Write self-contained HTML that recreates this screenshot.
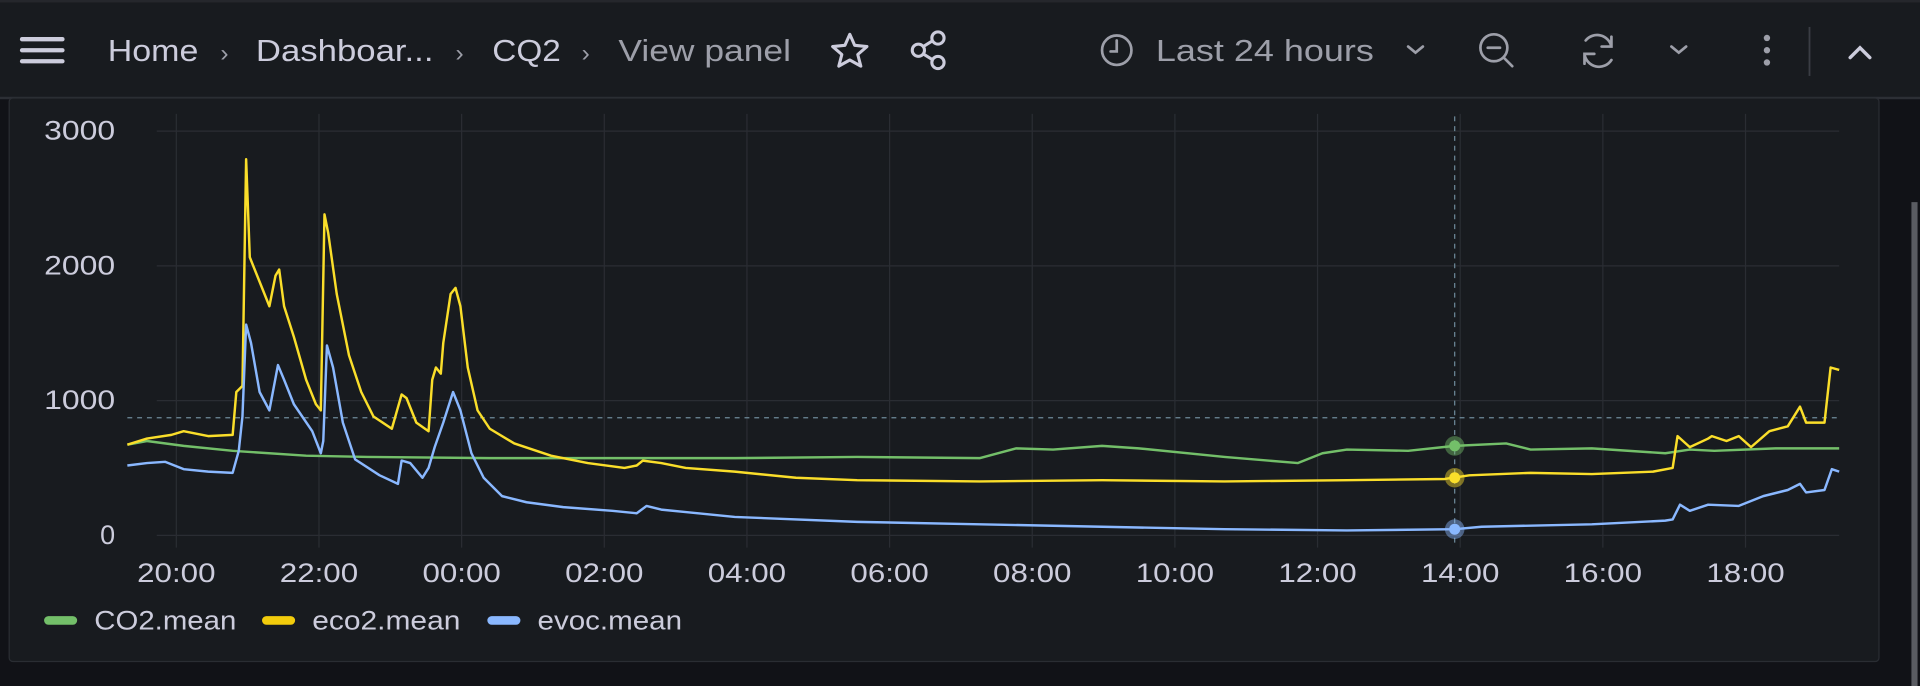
<!DOCTYPE html>
<html><head><meta charset="utf-8"><style>
html,body{margin:0;padding:0;background:#111217;overflow:hidden}
svg{display:block}
text{font-family:"Liberation Sans",sans-serif}
</style></head><body>
<svg width="1920" height="686" viewBox="0 0 1568 560" preserveAspectRatio="none">
<rect width="1568" height="560" fill="#111217"/>
<!-- header -->
<rect x="0" y="0" width="1568" height="80" fill="#181b1f"/>
<rect x="0" y="0" width="1568" height="2" fill="#25272c"/>
<rect x="0" y="79" width="1568" height="2" fill="#2c2f35"/>
<g stroke="#ccccdc" stroke-width="3.5" stroke-linecap="round">
<line x1="18" y1="32" x2="51" y2="32"/><line x1="18" y1="41" x2="51" y2="41"/><line x1="18" y1="50" x2="51" y2="50"/>
</g>
<g font-size="25" fill="#ccccdc" lengthAdjust="spacingAndGlyphs">
<text x="88" y="50" textLength="74" lengthAdjust="spacingAndGlyphs">Home</text>
<text x="180" y="50" fill="#9d9fa9" font-size="20">›</text>
<text x="209" y="50" textLength="145" lengthAdjust="spacingAndGlyphs">Dashboar...</text>
<text x="372" y="50" fill="#9d9fa9" font-size="20">›</text>
<text x="402" y="50" textLength="56" lengthAdjust="spacingAndGlyphs">CQ2</text>
<text x="475" y="50" fill="#9d9fa9" font-size="20">›</text>
<text x="505" y="50" fill="#9d9fa9" textLength="141" lengthAdjust="spacingAndGlyphs">View panel</text>
<text x="944" y="50" fill="#9d9fa9" textLength="178" lengthAdjust="spacingAndGlyphs">Last 24 hours</text>
</g>
<path d="M694 28 L698 37 L708 38 L700.5 44.5 L703 54 L694 49 L685 54 L687.5 44.5 L680 38 L690 37 Z" fill="none" stroke="#ccccdc" stroke-width="2.5" stroke-linejoin="round"/>
<g fill="none" stroke="#ccccdc" stroke-width="2.5">
<circle cx="750" cy="41" r="5"/><circle cx="766" cy="31" r="5"/><circle cx="766" cy="51" r="5"/>
<line x1="754" y1="38" x2="762" y2="33"/><line x1="754" y1="44" x2="762" y2="49"/>
</g>
<g fill="none" stroke="#9d9fa9" stroke-width="2.2" stroke-linecap="round">
<circle cx="912" cy="41" r="12"/><path d="M912 33 V42 H907"/>
<path d="M1150 38 l6 5 l6 -5"/>
<circle cx="1220" cy="39" r="11"/><path d="M1215 39 H1225 M1228 47 L1235 54"/>
<path d="M1295 33 A12 12 0 0 1 1316 38 M1316 49 A12 12 0 0 1 1294 44 M1316 30 V38 H1308 M1294 52 V44 H1302"/>
<path d="M1365 38 l6 5 l6 -5"/>
<path d="M1511 47 l8 -8 l8 8" stroke="#ccccdc" stroke-width="2.8"/>
</g>
<g fill="#9d9fa9"><circle cx="1443" cy="31" r="2.6"/><circle cx="1443" cy="41" r="2.6"/><circle cx="1443" cy="51" r="2.6"/></g>
<rect x="1477" y="22" width="1.5" height="40" fill="#3a3d44"/>
<!-- panel -->
<rect x="7.5" y="80" width="1527" height="460" rx="3" fill="#181b1f" stroke="#2a2d33" stroke-width="1"/>
<rect x="1561" y="165" width="5" height="395" fill="#5a5c62"/>
<!-- grid -->
<g stroke="#2a2d33" stroke-width="1">
<line x1="128" y1="107" x2="1502" y2="107"/><line x1="128" y1="217" x2="1502" y2="217"/>
<line x1="128" y1="327" x2="1502" y2="327"/><line x1="128" y1="437" x2="1502" y2="437"/>
<line x1="144" y1="93" x2="144" y2="447"/><line x1="260.5" y1="93" x2="260.5" y2="447"/>
<line x1="377" y1="93" x2="377" y2="447"/><line x1="493.5" y1="93" x2="493.5" y2="447"/>
<line x1="610" y1="93" x2="610" y2="447"/><line x1="726.5" y1="93" x2="726.5" y2="447"/>
<line x1="843" y1="93" x2="843" y2="447"/><line x1="959.5" y1="93" x2="959.5" y2="447"/>
<line x1="1076" y1="93" x2="1076" y2="447"/><line x1="1192.5" y1="93" x2="1192.5" y2="447"/>
<line x1="1309" y1="93" x2="1309" y2="447"/><line x1="1425.5" y1="93" x2="1425.5" y2="447"/>
</g>
<g font-size="22" fill="#ccccdc" text-anchor="end">
<text x="94" y="114" textLength="58" lengthAdjust="spacingAndGlyphs">3000</text>
<text x="94" y="224" textLength="58" lengthAdjust="spacingAndGlyphs">2000</text>
<text x="94" y="334" textLength="58" lengthAdjust="spacingAndGlyphs">1000</text>
<text x="94" y="444">0</text>
</g>
<g font-size="22" fill="#ccccdc" text-anchor="middle">
<text x="144" y="475" textLength="64" lengthAdjust="spacingAndGlyphs">20:00</text>
<text x="260.5" y="475" textLength="64" lengthAdjust="spacingAndGlyphs">22:00</text>
<text x="377" y="475" textLength="64" lengthAdjust="spacingAndGlyphs">00:00</text>
<text x="493.5" y="475" textLength="64" lengthAdjust="spacingAndGlyphs">02:00</text>
<text x="610" y="475" textLength="64" lengthAdjust="spacingAndGlyphs">04:00</text>
<text x="726.5" y="475" textLength="64" lengthAdjust="spacingAndGlyphs">06:00</text>
<text x="843" y="475" textLength="64" lengthAdjust="spacingAndGlyphs">08:00</text>
<text x="959.5" y="475" textLength="64" lengthAdjust="spacingAndGlyphs">10:00</text>
<text x="1076" y="475" textLength="64" lengthAdjust="spacingAndGlyphs">12:00</text>
<text x="1192.5" y="475" textLength="64" lengthAdjust="spacingAndGlyphs">14:00</text>
<text x="1309" y="475" textLength="64" lengthAdjust="spacingAndGlyphs">16:00</text>
<text x="1425.5" y="475" textLength="64" lengthAdjust="spacingAndGlyphs">18:00</text>
</g>
<g stroke="#6e8a9a" stroke-width="1" stroke-dasharray="4,4">
<line x1="104" y1="341" x2="1502" y2="341"/>
<line x1="1188" y1="95" x2="1188" y2="445"/>
</g>
<g fill="none" stroke-width="2" stroke-linejoin="round">
<polyline stroke="#73bf69" points="104,363 120,360 150,364 190,368 250,372 300,373 400,374 500,374 600,374 700,373 800,374 830,366 860,367 900,364 930,366 1000,373 1060,378 1080,370 1100,367 1150,368 1188,364 1230,362 1250,367 1300,366 1360,370 1380,367 1400,368 1450,366 1502,366"/>
<polyline stroke="#fade2a" points="104,363 120,358 140,355 150,352 170,356 190,355 193,320 198,315 201,130 204,210 212,230 220,250 225,225 228,220 232,250 240,275 250,310 258,330 262,335 265,175 268,190 275,240 285,290 295,320 305,340 320,350 328,322 332,325 340,345 350,352 353,310 356,300 360,305 362,280 368,240 372,235 376,250 382,300 390,335 400,350 420,362 450,372 480,378 510,382 520,380 525,376 540,378 560,382 600,385 650,390 700,392 800,393 900,392 1000,393 1100,392 1180,391 1200,388 1250,386 1300,387 1350,385 1366,382 1370,356 1380,365 1395,358 1398,356 1410,360 1420,356 1430,365 1445,352 1460,348 1470,332 1475,345 1490,345 1495,300 1502,302"/>
<polyline stroke="#8ab8ff" points="104,380 120,378 135,377 150,383 170,385 190,386 195,368 198,340 201,265 205,280 212,320 220,335 227,298 232,310 240,330 255,352 262,370 264,360 267,282 272,300 280,345 290,375 310,388 325,395 328,376 335,378 345,390 350,382 355,365 362,345 370,320 376,335 385,370 395,390 410,405 430,410 460,414 500,417 520,419 528,413 540,416 560,418 600,422 700,426 800,428 900,430 1000,432 1100,433 1188,432 1210,430 1300,428 1360,425 1366,424 1372,412 1380,417 1395,412 1420,413 1440,405 1460,400 1470,395 1475,402 1490,400 1496,383 1502,385"/>
</g>
<circle cx="1188" cy="364" r="8" fill="#73bf69" opacity="0.45"/><circle cx="1188" cy="364" r="4.5" fill="#73bf69"/>
<circle cx="1188" cy="390" r="8" fill="#fade2a" opacity="0.45"/><circle cx="1188" cy="390" r="4.5" fill="#fade2a"/>
<circle cx="1188" cy="432" r="8" fill="#8ab8ff" opacity="0.45"/><circle cx="1188" cy="432" r="4.5" fill="#8ab8ff"/>
<!-- legend -->
<rect x="36" y="503" width="27" height="7" rx="3.5" fill="#73bf69"/>
<rect x="214" y="503" width="27" height="7" rx="3.5" fill="#f2cc0c"/>
<rect x="398" y="503" width="27" height="7" rx="3.5" fill="#8ab8ff"/>
<g font-size="22" fill="#ccccdc">
<text x="77" y="514" textLength="116" lengthAdjust="spacingAndGlyphs">CO2.mean</text>
<text x="255" y="514" textLength="121" lengthAdjust="spacingAndGlyphs">eco2.mean</text>
<text x="439" y="514" textLength="118" lengthAdjust="spacingAndGlyphs">evoc.mean</text>
</g>
</svg>
</body></html>
